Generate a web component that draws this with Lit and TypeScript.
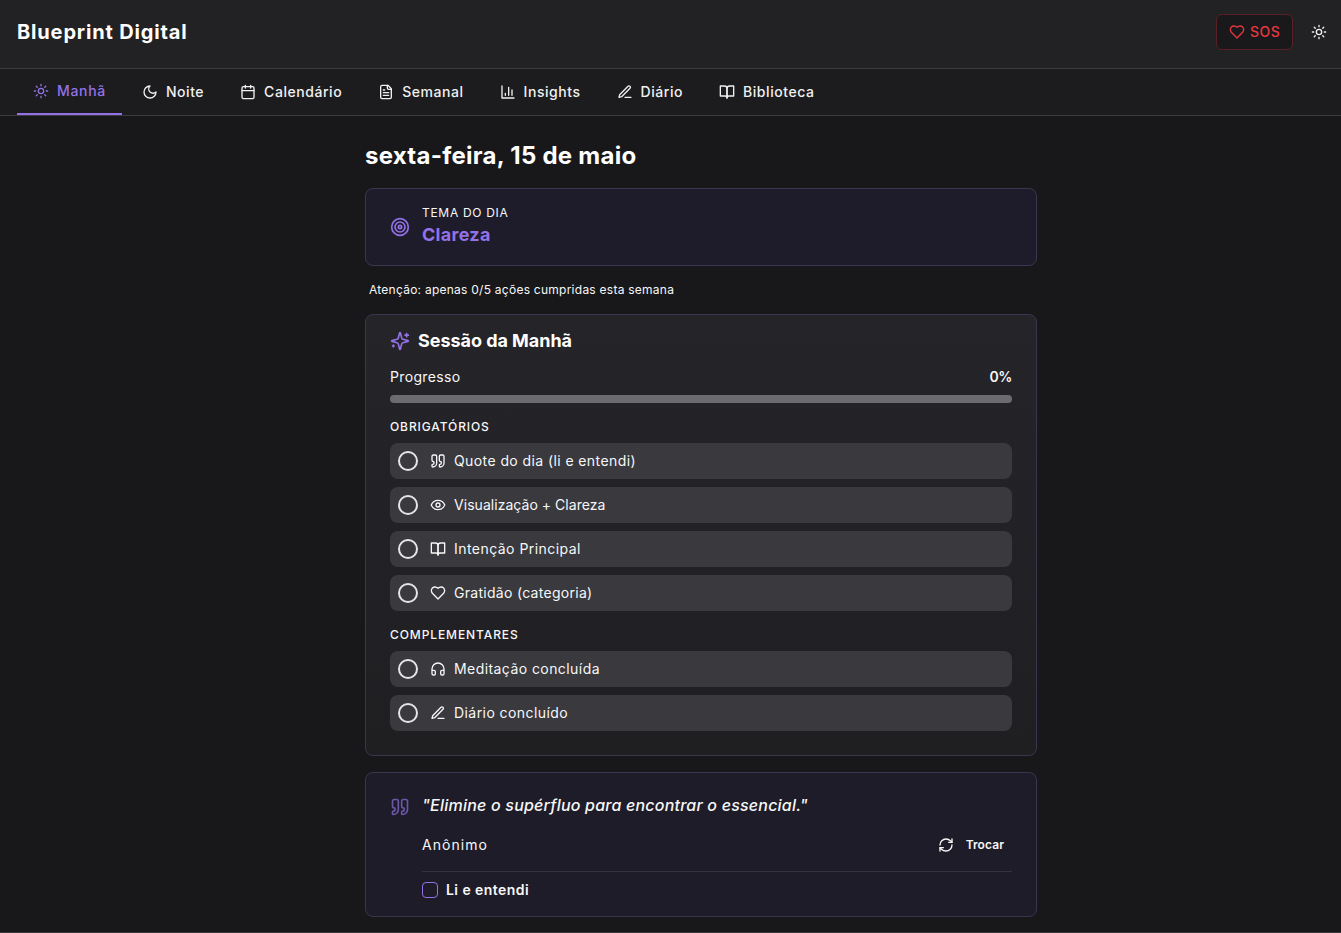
import { LitElement, html, css, svg } from "lit";
import { customElement } from "lit/decorators.js";

const I: Record<string, unknown> = {
  sun: svg`<circle cx="12" cy="12" r="4"/><path d="M12 2v2M12 20v2M4.93 4.93l1.41 1.41M17.66 17.66l1.41 1.41M2 12h2M20 12h2M6.34 17.66l-1.41 1.41M19.07 4.93l-1.41 1.41"/>`,
  moon: svg`<path d="M12 3a6 6 0 0 0 9 9 9 9 0 1 1-9-9Z"/>`,
  calendar: svg`<path d="M8 2v4M16 2v4"/><rect x="3" y="4" width="18" height="18" rx="2"/><path d="M3 10h18"/>`,
  file: svg`<path d="M15 2H6a2 2 0 0 0-2 2v16a2 2 0 0 0 2 2h12a2 2 0 0 0 2-2V7Z"/><path d="M14 2v4a2 2 0 0 0 2 2h4M10 9H8M16 13H8M16 17H8"/>`,
  chart: svg`<path d="M3 3v18h18M18 17V9M13 17V5M8 17v-3"/>`,
  pen: svg`<path d="M12 20h9"/><path d="M16.5 3.5a2.12 2.12 0 0 1 3 3L7 19l-4 1 1-4Z"/>`,
  book: svg`<path d="M2 3h6a4 4 0 0 1 4 4v14a3 3 0 0 0-3-3H2z"/><path d="M22 3h-6a4 4 0 0 0-4 4v14a3 3 0 0 1 3-3h7z"/>`,
  target: svg`<circle cx="12" cy="12" r="10"/><circle cx="12" cy="12" r="6"/><circle cx="12" cy="12" r="2"/>`,
  sparkles: svg`<path d="M9.937 15.5A2 2 0 0 0 8.5 14.063l-6.135-1.582a.5.5 0 0 1 0-.962L8.5 9.936A2 2 0 0 0 9.937 8.5l1.582-6.135a.5.5 0 0 1 .963 0L14.063 8.5A2 2 0 0 0 15.5 9.937l6.135 1.581a.5.5 0 0 1 0 .964L15.5 14.063a2 2 0 0 0-1.437 1.437l-1.582 6.135a.5.5 0 0 1-.963 0z"/><path d="M20 3v4M22 5h-4M4 17v2M5 18H3"/>`,
  quote: svg`<path d="M16 3a2 2 0 0 0-2 2v6a2 2 0 0 0 2 2 1 1 0 0 1 1 1v1a2 2 0 0 1-2 2 1 1 0 0 0-1 1v2a1 1 0 0 0 1 1 6 6 0 0 0 6-6V5a2 2 0 0 0-2-2z"/><path d="M5 3a2 2 0 0 0-2 2v6a2 2 0 0 0 2 2 1 1 0 0 1 1 1v1a2 2 0 0 1-2 2 1 1 0 0 0-1 1v2a1 1 0 0 0 1 1 6 6 0 0 0 6-6V5a2 2 0 0 0-2-2z"/>`,
  eye: svg`<path d="M2.062 12.348a1 1 0 0 1 0-.696 10.75 10.75 0 0 1 19.876 0 1 1 0 0 1 0 .696 10.75 10.75 0 0 1-19.876 0"/><circle cx="12" cy="12" r="3"/>`,
  heart: svg`<path d="M19 14c1.49-1.46 3-3.21 3-5.5A5.5 5.5 0 0 0 16.5 3c-1.76 0-3 .5-4.5 2-1.5-1.5-2.74-2-4.5-2A5.5 5.5 0 0 0 2 8.5c0 2.3 1.5 4.05 3 5.5l7 7Z"/>`,
  headphones: svg`<path d="M3 14h3a2 2 0 0 1 2 2v3a2 2 0 0 1-2 2H5a2 2 0 0 1-2-2v-7a9 9 0 0 1 18 0v7a2 2 0 0 1-2 2h-1a2 2 0 0 1-2-2v-3a2 2 0 0 1 2-2h3"/>`,
  refresh: svg`<path d="M3 12a9 9 0 0 1 9-9 9.75 9.75 0 0 1 6.74 2.74L21 8"/><path d="M21 3v5h-5"/><path d="M21 12a9 9 0 0 1-9 9 9.75 9.75 0 0 1-6.74-2.74L3 16"/><path d="M8 16H3v5"/>`,
};

const icon = (n: string, size = 16) => html`<svg class="ic" width=${size} height=${size} viewBox="0 0 24 24" fill="none" stroke="currentColor" stroke-width="2" stroke-linecap="round" stroke-linejoin="round">${I[n]}</svg>`;

const tabs = [
  ["sun", "Manhã"], ["moon", "Noite"], ["calendar", "Calendário"], ["file", "Semanal"],
  ["chart", "Insights"], ["pen", "Diário"], ["book", "Biblioteca"],
];
const req = [
  ["quote", "Quote do dia (li e entendi)", 0.41],
  ["eye", "Visualização + Clareza", 0.04],
  ["book", "Intenção Principal", 0.46],
  ["heart", "Gratidão (categoria)", 0.29],
];
const comp = [
  ["headphones", "Meditação concluída", 0.43],
  ["pen", "Diário concluído", 0.43],
];

@customElement("app-root")
export class AppRoot extends LitElement {
  static styles = css`
    :host { display: block; box-sizing: border-box; min-height: 933px; background: #18181a; border-bottom: 1px solid #38383b; color: #f7f7f8; font-family: Inter, "Liberation Sans", sans-serif; font-size: 14px; line-height: 20px; letter-spacing: .45px; }
    .ic { flex: none; display: block; }
    .top { display: flex; align-items: center; justify-content: space-between; height: 64px; padding: 0 4px 4px 17px; background: #222224; border-bottom: 1px solid #3c3c42; }
    .brand { font-size: 20px; line-height: 28px; font-weight: 700; letter-spacing: .84px; color: #fff; }
    .acts { display: flex; align-items: center; gap: 8px; }
    .sos { display: flex; align-items: center; gap: 5px; height: 36px; width: 77px; box-sizing: border-box; padding: 0 12px; background: #19191b; border: 1px solid #5b2026; border-radius: 6px; color: #e5383f; font-weight: 500; }
    .theme { width: 36px; height: 36px; display: flex; align-items: center; justify-content: center; color: #f2f2f3; }
    .nav { display: flex; gap: 4px; height: 46px; padding-left: 17px; background: #1c1c1e; border-bottom: 1px solid #3c3c42; }
    .tab { display: flex; align-items: center; gap: 8px; padding: 0 16px; font-weight: 500; letter-spacing: .55px; color: #f0f0f1; box-sizing: border-box; }
    .tab.on { color: #9272e6; border-bottom: 2px solid #9272e6; letter-spacing: .68px; }
    .main { width: 672px; margin-left: 365px; padding-top: 24px; display: flex; flex-direction: column; }
    h1 { margin: 0 0 16px; font-size: 24px; line-height: 32px; font-weight: 700; letter-spacing: .27px; color: #fff; }
    .card { box-sizing: border-box; border: 1px solid #3a3650; border-radius: 8px; }
    .theme-card { display: flex; align-items: center; gap: 12px; padding: 16px 24px; background: #1e1c2a; }
    .purple { color: #9272e6; }
    .small { font-size: 12px; line-height: 16px; letter-spacing: .7px; }
    .val { font-size: 18px; line-height: 28px; font-weight: 700; color: #9272e6; letter-spacing: .28px; }
    .warn { margin: 16px 0; padding-left: 4px; font-size: 12px; line-height: 16px; letter-spacing: .25px; }
    .session { padding: 12px 24px 24px; background: linear-gradient(180deg, #252429, #1f1f22); }
    .title { display: flex; align-items: center; gap: 8px; height: 28px; font-size: 18px; font-weight: 700; letter-spacing: -.04px; color: #fff; }
    .prog { display: flex; justify-content: space-between; margin-top: 12px; letter-spacing: .34px; }
    .prog b { font-weight: 600; letter-spacing: -.4px; }
    .bar { height: 8px; margin-top: 8px; border-radius: 99px; background: #6c6c70; }
    .sec { margin-top: 16px; margin-bottom: 8px; font-size: 12px; line-height: 16px; font-weight: 500; letter-spacing: .9px; }
    .rows { display: flex; flex-direction: column; gap: 8px; }
    .row { display: flex; align-items: center; height: 36px; padding: 0 8px; border-radius: 8px; background: #39393e; }
    .radio { box-sizing: border-box; width: 20px; height: 20px; border: 2px solid #e6e6e8; border-radius: 50%; margin-right: 12px; }
    .row .ic { margin-right: 8px; }
    .quote-card { margin-top: 16px; padding: 20px 24px 16px; background: #1e1c28; }
    .q { display: flex; gap: 12px; align-items: flex-start; }
    .q > .ic { color: #6a57a8; margin-top: 4px; }
    .qb { flex: 1; min-width: 0; }
    .qt { font-size: 16px; line-height: 24px; font-style: italic; font-weight: 500; letter-spacing: .21px; }
    .meta { display: flex; align-items: center; justify-content: space-between; height: 32px; margin-top: 12px; letter-spacing: 1.06px; }
    .btn { display: flex; align-items: center; gap: 12px; padding: 0 8px; font-size: 12px; font-weight: 600; letter-spacing: .09px; }
    .chk { display: flex; align-items: center; gap: 8px; margin-top: 10px; padding-top: 8px; border-top: 1px solid #343240; font-weight: 600; letter-spacing: .44px; }
    .box { box-sizing: border-box; width: 16px; height: 16px; border: 1px solid #9272e6; border-radius: 4px; }
  `;

  row(r: (string | number)[]) {
    return html`<div class="row"><span class="radio"></span>${icon(r[0] as string)}<span style="letter-spacing:${r[2]}px">${r[1]}</span></div>`;
  }

  render() {
    return html`
      <div class="top">
        <div class="brand">Blueprint Digital</div>
        <div class="acts">
          <div class="sos">${icon("heart")}<span>SOS</span></div>
          <div class="theme">${icon("sun")}</div>
        </div>
      </div>
      <div class="nav">
        ${tabs.map((t, i) => html`<div class="tab ${i === 0 ? "on" : ""}">${icon(t[0])}<span>${t[1]}</span></div>`)}
      </div>
      <div class="main">
        <h1>sexta-feira, 15 de maio</h1>
        <div class="card theme-card">
          <span class="purple">${icon("target", 20)}</span>
          <div><div class="small">TEMA DO DIA</div><div class="val">Clareza</div></div>
        </div>
        <div class="warn">Atenção: apenas 0/5 ações cumpridas esta semana</div>
        <div class="card session">
          <div class="title"><span class="purple">${icon("sparkles", 20)}</span>Sessão da Manhã</div>
          <div class="prog"><span>Progresso</span><b>0%</b></div>
          <div class="bar"></div>
          <div class="sec">OBRIGATÓRIOS</div>
          <div class="rows">${req.map((r) => this.row(r))}</div>
          <div class="sec">COMPLEMENTARES</div>
          <div class="rows">${comp.map((r) => this.row(r))}</div>
        </div>
        <div class="card quote-card">
          <div class="q">
            ${icon("quote", 20)}
            <div class="qb">
              <div class="qt">"Elimine o supérfluo para encontrar o essencial."</div>
              <div class="meta"><span>Anônimo</span><div class="btn">${icon("refresh")}<span>Trocar</span></div></div>
              <div class="chk"><span class="box"></span><span>Li e entendi</span></div>
            </div>
          </div>
        </div>
      </div>
    `;
  }
}
